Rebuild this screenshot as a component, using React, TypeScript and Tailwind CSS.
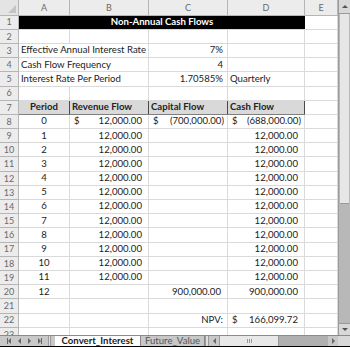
import React from "react";

const W = { rh: 19, A: 51, B: 79, C: 79, D: 77, E: 33 };
const RH = 14.2;
const font = { fontFamily: "Lato, 'Open Sans', sans-serif" };

function Cell({ w, children, className = "" }: { w: number; children?: React.ReactNode; className?: string }) {
  return (
    <div
      className={"box-border shrink-0 border-r border-b border-[#dadada] flex items-center overflow-hidden whitespace-nowrap " + className}
      style={{ width: w, height: RH }}
    >
      {children}
    </div>
  );
}

function RowHead({ n }: { n: number }) {
  return (
    <div
      className="box-border shrink-0 border-r border-b border-[#b5b5b5] bg-[#ececec] flex items-center justify-center text-[#6a6a6a] text-[9px]"
      style={{ width: W.rh, height: RH }}
    >
      {n}
    </div>
  );
}

function Money({ dollar, value }: { dollar?: boolean; value: string }) {
  const neg = value.startsWith("(");
  return (
    <div className={"flex w-full justify-between pl-[4px] " + (neg ? "pr-[3px]" : "pr-[6px]")}>
      <span>{dollar ? "$" : ""}</span>
      <span>{value}</span>
    </div>
  );
}

function Tri({ dir }: { dir: "l" | "r" }) {
  return dir === "l" ? (
    <div className="w-0 h-0 border-t-[3px] border-t-transparent border-b-[3px] border-b-transparent border-r-[3px] border-r-[#666]" />
  ) : (
    <div className="w-0 h-0 border-t-[3px] border-t-transparent border-b-[3px] border-b-transparent border-l-[3px] border-l-[#666]" />
  );
}

export default function App() {
  const periods = Array.from({ length: 13 }, (_, i) => i);
  return (
    <div className="w-[350px] h-[347px] bg-white overflow-hidden flex flex-col text-[9.6px] text-[#222]" style={font}>
      <div className="flex flex-1 min-h-0">
        <div className="flex flex-col w-[338px] overflow-hidden">
          {/* column headers */}
          <div className="flex shrink-0 h-[15.6px] text-[9px]">
            <div className="box-border shrink-0 border-r border-b border-[#b5b5b5] bg-[#e4e4e4] relative" style={{ width: W.rh }}>
              <div className="absolute right-[2px] bottom-[2px] w-0 h-0 border-l-[8px] border-l-transparent border-b-[8px] border-b-[#c4c4c4]" />
            </div>
            {(["A", "B", "C", "D", "E"] as const).map((c) => (
              <div
                key={c}
                className="box-border shrink-0 border-r border-b border-[#b5b5b5] bg-[#ececec] flex items-center justify-center text-[#6a6a6a]"
                style={{ width: W[c] }}
              >
                {c}
              </div>
            ))}
          </div>
          {/* row 1 */}
          <div className="flex">
            <RowHead n={1} />
            <div
              className="box-border shrink-0 bg-black text-white font-bold flex items-center justify-center border-b border-[#dadada]"
              style={{ width: W.A + W.B + W.C + W.D, height: RH }}
            >
              Non-Annual Cash Flows
            </div>
            <Cell w={W.E} />
          </div>
          {/* row 2 */}
          <div className="flex">
            <RowHead n={2} />
            <Cell w={W.A} />
            <Cell w={W.B} />
            <Cell w={W.C} />
            <Cell w={W.D} />
            <Cell w={W.E} />
          </div>
          {[
            ["Effective Annual Interest Rate", "7%", ""],
            ["Cash Flow Frequency", "4", ""],
            ["Interest Rate Per Period", "1.70585%", "Quarterly"],
          ].map(([label, val, d], i) => (
            <div className="flex" key={label}>
              <RowHead n={3 + i} />
              <Cell w={W.A + W.B} className="pl-[2px]">
                {label}
              </Cell>
              <Cell w={W.C} className="justify-end pr-[4px]">
                {val}
              </Cell>
              <Cell w={W.D} className="pl-[2px]">
                {d}
              </Cell>
              <Cell w={W.E} />
            </div>
          ))}
          {/* row 6 */}
          <div className="flex">
            <RowHead n={6} />
            <Cell w={W.A} />
            <Cell w={W.B} />
            <Cell w={W.C} />
            <Cell w={W.D} />
            <Cell w={W.E} />
          </div>
          {/* row 7 header */}
          <div className="flex">
            <RowHead n={7} />
            <div
              className="box-border shrink-0 flex bg-[#d9d9d9] font-bold border-b border-[#7f7f7f]"
              style={{ width: W.A + W.B + W.C + W.D, height: RH }}
            >
              <div className="flex items-center justify-center border-r border-[#4a4a4a]" style={{ width: W.A }}>
                Period
              </div>
              <div className="flex items-center pl-[2px] border-r border-[#4a4a4a]" style={{ width: W.B }}>
                Revenue Flow
              </div>
              <div className="flex items-center pl-[2px] border-r border-[#4a4a4a]" style={{ width: W.C }}>
                Capital Flow
              </div>
              <div className="flex items-center pl-[2px] border-r border-[#4a4a4a]" style={{ width: W.D }}>
                Cash Flow
              </div>
            </div>
            <Cell w={W.E} />
          </div>
          {periods.map((p) => (
            <div className="flex" key={p}>
              <RowHead n={p === 12 ? 20 : 8 + p} />
              <Cell w={W.A} className="justify-center">
                {p}
              </Cell>
              <Cell w={W.B}>{p < 12 && <Money dollar={p === 0} value="12,000.00" />}</Cell>
              <Cell w={W.C}>
                {p === 0 && <Money dollar value="(700,000.00)" />}
                {p === 12 && <Money value="900,000.00" />}
              </Cell>
              <Cell w={W.D}>
                {p === 0 ? (
                  <Money dollar value="(688,000.00)" />
                ) : (
                  <Money value={p === 12 ? "900,000.00" : "12,000.00"} />
                )}
              </Cell>
              <Cell w={W.E} />
            </div>
          ))}
          {/* row 21 */}
          <div className="flex">
            <RowHead n={21} />
            <Cell w={W.A} />
            <Cell w={W.B} />
            <Cell w={W.C} />
            <Cell w={W.D} />
            <Cell w={W.E} />
          </div>
          {/* row 22 */}
          <div className="flex">
            <RowHead n={22} />
            <Cell w={W.A} />
            <Cell w={W.B} />
            <Cell w={W.C} className="justify-end pr-[4px]">
              NPV:
            </Cell>
            <Cell w={W.D}>
              <Money dollar value="166,099.72" />
            </Cell>
            <Cell w={W.E} />
          </div>
          {/* row 23 partial */}
          <div className="flex">
            <RowHead n={23} />
            <Cell w={W.A} />
            <Cell w={W.B} />
            <Cell w={W.C} />
            <Cell w={W.D} />
            <Cell w={W.E} />
          </div>
        </div>
        {/* vertical scrollbar */}
        <div className="w-[12px] flex flex-col bg-[#b8b8b8] border-l border-[#9a9a9a]">
          <div className="h-[14px] bg-[#d8d8d8] border-b border-[#9a9a9a] flex items-center justify-center">
            <div className="w-0 h-0 border-l-[3px] border-l-transparent border-r-[3px] border-r-transparent border-b-[3px] border-b-[#555]" />
          </div>
          <div className="h-[190px] bg-[#e6e6e6] border-b border-[#9a9a9a] mx-[1px]" />
          <div className="flex-1" />
          <div className="h-[12px] bg-[#d8d8d8] border-t border-[#9a9a9a] flex items-center justify-center">
            <div className="w-0 h-0 border-l-[3px] border-l-transparent border-r-[3px] border-r-transparent border-t-[3px] border-t-[#555]" />
          </div>
        </div>
      </div>
      {/* tab bar */}
      <div className="h-[12px] shrink-0 flex items-stretch bg-[#c8c8c8] border-t border-[#8a8a8a] border-b border-b-black text-[9.6px]">
        <div className="w-[48px] flex items-center justify-around px-[3px]">
          <div className="flex items-center">
            <div className="w-[1px] h-[6px] bg-[#666]" />
            <Tri dir="l" />
          </div>
          <Tri dir="l" />
          <Tri dir="r" />
          <div className="flex items-center">
            <Tri dir="r" />
            <div className="w-[1px] h-[6px] bg-[#666]" />
          </div>
        </div>
        <div className="w-[3px] bg-[#e0e0e0] border-x border-[#999]" />
        <div className="w-[4px]" />
        <div className="w-[86px] bg-white flex items-center justify-center font-bold text-[#222] border-r border-[#888]">
          Convert_Interest
        </div>
        <div className="w-[64px] flex items-center justify-center text-[#555] border-r border-[#888]">
          Future_Value
        </div>
        <div className="w-[4px] bg-[#e0e0e0] border-x border-[#999]" />
        <div className="flex-1 flex items-stretch">
          <div className="w-[10px] flex items-center justify-center">
            <Tri dir="l" />
          </div>
          <div className="w-[60px] bg-[#e8e8e8] border-x border-[#999] flex items-center justify-center gap-[1px]">
            <div className="w-[1px] h-[4px] bg-[#999]" />
            <div className="w-[1px] h-[4px] bg-[#999]" />
            <div className="w-[1px] h-[4px] bg-[#999]" />
          </div>
          <div className="flex-1 bg-[#b0b0b0]" />
          <div className="w-[10px] flex items-center justify-center">
            <Tri dir="r" />
          </div>
          <div className="w-[12px] bg-[#d8d8d8]" />
        </div>
      </div>
    </div>
  );
}
